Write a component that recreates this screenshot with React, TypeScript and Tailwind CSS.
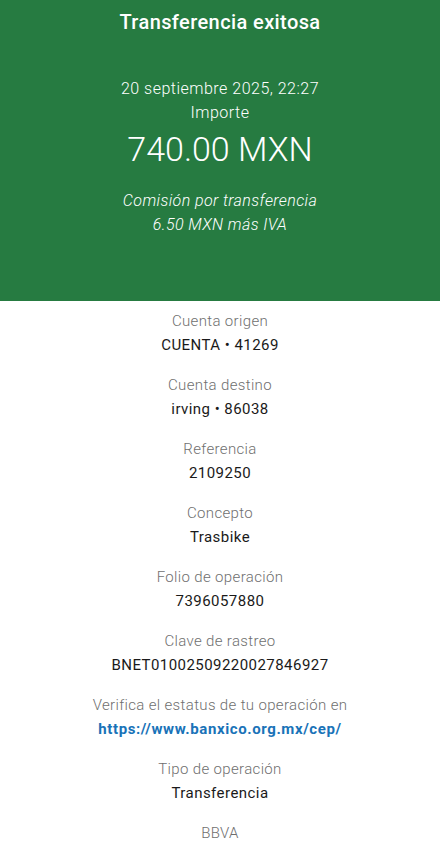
import React from 'react';

const rows: { label: string; value: string; link?: boolean }[] = [
  { label: 'Cuenta origen', value: 'CUENTA • 41269' },
  { label: 'Cuenta destino', value: 'irving • 86038' },
  { label: 'Referencia', value: '2109250' },
  { label: 'Concepto', value: 'Trasbike' },
  { label: 'Folio de operación', value: '7396057880' },
  { label: 'Clave de rastreo', value: 'BNET01002509220027846927' },
  { label: 'Verifica el estatus de tu operación en', value: 'https://www.banxico.org.mx/cep/', link: true },
  { label: 'Tipo de operación', value: 'Transferencia' },
];

export default function App() {
  return (
    <div className="min-h-screen bg-white font-['Roboto',sans-serif] text-center">
      <div className="bg-[#267b41] text-white h-[301px] flex flex-col items-center">
        <h1 className="text-[20px] leading-[44px] font-medium tracking-[0.4px]">Transferencia exitosa</h1>
        <div className="mt-[33px] font-light text-[16px] leading-[24px] tracking-[0.5px]">
          <p>20 septiembre 2025, 22:27</p>
          <p>Importe</p>
        </div>
        <p className="font-light text-[34px] leading-[48px]">740.00 MXN</p>
        <div className="mt-[16px] font-light italic text-[16px] leading-[24px] tracking-[0.4px]">
          <p>Comisión por transferencia</p>
          <p>6.50 MXN más IVA</p>
        </div>
      </div>
      <div className="flex flex-col gap-[16px] pt-[8px] text-[15px] leading-[24px]">
        {rows.map((r) => (
          <div key={r.label}>
            <p className="text-[#6f6f6f] font-light tracking-[0.35px]">{r.label}</p>
            {r.link ? (
              <p className="text-[#1973b8] font-bold tracking-[0.6px]">{r.value}</p>
            ) : (
              <p className="text-[#1a1a1a] tracking-[0.45px]">{r.value}</p>
            )}
          </div>
        ))}
        <p className="text-[#6f6f6f] font-light tracking-[0.35px]">BBVA</p>
      </div>
    </div>
  );
}
